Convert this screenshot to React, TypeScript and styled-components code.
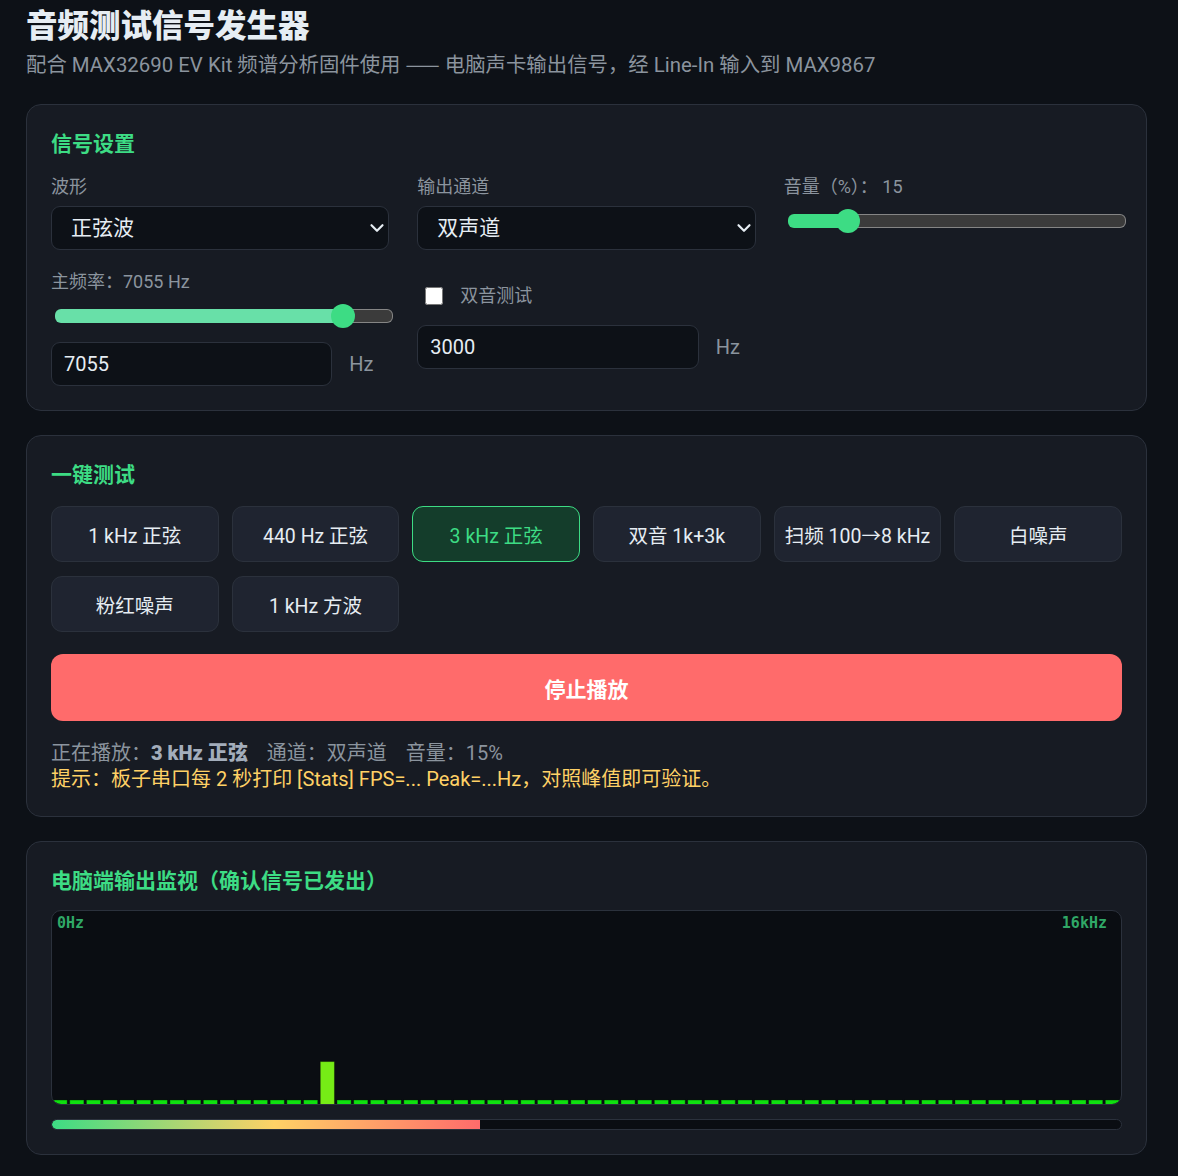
import React from 'react';
import styled, { createGlobalStyle } from 'styled-components';
import { ChevronDown } from 'lucide-react';

const Colors = {
  Page: '#0d1117',
  Card: '#171b23',
  Border: '#2b313c',
  Field: '#0d1117',
  Text: '#e6edf3',
  Muted: '#8b949e',
  Green: '#3ddc84',
  Red: '#ff6b6b',
  Yellow: '#ffd166',
  Screen: '#0a0d12',
};

const GlobalStyle = createGlobalStyle`
  body {
    margin: 0;
    background: ${Colors.Page};
    color: ${Colors.Text};
    font-family: Roboto, "Noto Sans CJK SC", sans-serif;
  }
`;

const Wrapper = styled.div`
  max-width: 1121px;
  padding: 7px 0 24px 26px;
`;

const Title = styled.h1`
  margin: 0;
  font-size: 31.5px;
  line-height: 40px;
  font-weight: 900;
`;

const Subtitle = styled.p`
  margin: 4px 0 25px;
  height: 28px;
  font-size: 20.4px;
  line-height: 28px;
  color: ${Colors.Muted};
`;

// CJK em dashes join into one long rule
const Rule = styled.span`
  font-family: "Noto Sans CJK SC", sans-serif;
  line-height: 1;
`;

const Card = styled.section`
  background: ${Colors.Card};
  border: 1px solid ${Colors.Border};
  border-radius: 15px;
  padding: 24px;
  margin-bottom: 24px;
`;

const CardTitle = styled.h2`
  margin: 0 0 14px;
  font-size: 21px;
  line-height: 30px;
  font-weight: 700;
  color: ${Colors.Green};
`;

const SettingsGrid = styled.div`
  display: grid;
  grid-template-columns: repeat(3, 1fr);
  column-gap: 28px;
  row-gap: 18px;
`;

const Field = styled.div`
  display: flex;
  flex-direction: column;
  min-width: 0;
`;

const Label = styled.label`
  font-size: 18px;
  line-height: 27px;
  color: ${Colors.Muted};
`;

const SelectWrap = styled.div`
  position: relative;
  margin-top: 6px;

  svg {
    position: absolute;
    right: 1px;
    top: 11px;
    pointer-events: none;
  }
`;

const Select = styled.select`
  appearance: none;
  width: 100%;
  height: 44px;
  padding: 0 19px;
  background: ${Colors.Field};
  color: ${Colors.Text};
  border: 1px solid ${Colors.Border};
  border-radius: 9px;
  font-family: inherit;
  font-size: 21px;
  outline: none;
`;

type RangeProps = { $value: number; $fill: string };

const Range = styled.input.attrs({ type: 'range' })<RangeProps>`
  -webkit-appearance: none;
  appearance: none;
  width: calc(100% - 2px);
  height: 12px;
  margin: 14px 0 0 4px;
  border: 1px solid transparent;
  border-radius: 6px;
  background:
    linear-gradient(to right, ${p => p.$fill} calc(12px + (100% - 24px) * ${p => p.$value / 100}), transparent 0) border-box,
    linear-gradient(#3b3b3b, #3b3b3b) padding-box,
    linear-gradient(#858585, #858585) border-box;
  outline: none;

  &::-webkit-slider-thumb {
    -webkit-appearance: none;
    width: 24px;
    height: 24px;
    border-radius: 50%;
    background: ${Colors.Green};
    border: none;
  }
`;

const InputRow = styled.div<{ $top: number }>`
  display: flex;
  align-items: center;
  gap: 17px;
  margin-top: ${p => p.$top}px;
`;

const NumberInput = styled.input`
  flex: 1;
  min-width: 0;
  height: 44px;
  box-sizing: border-box;
  padding: 0 12px;
  background: ${Colors.Field};
  color: ${Colors.Text};
  border: 1px solid ${Colors.Border};
  border-radius: 9px;
  font-family: inherit;
  font-size: 20px;
  outline: none;
`;

const Unit = styled.span`
  width: 40px;
  font-size: 20px;
  color: ${Colors.Muted};
`;

const CheckRow = styled.label`
  display: flex;
  align-items: center;
  gap: 17px;
  margin: 15px 0 0 8px;
  font-size: 18px;
  line-height: 26px;
  color: ${Colors.Muted};

  input {
    width: 18px;
    height: 18px;
    margin: 0;
    color-scheme: light;
  }
`;

const PresetGrid = styled.div`
  display: grid;
  grid-template-columns: repeat(6, 1fr);
  column-gap: 13px;
  row-gap: 14px;
  margin-top: 16px;
`;

const PresetButton = styled.button<{ $active?: boolean }>`
  height: 56px;
  padding: 0 6px;
  border-radius: 11px;
  border: 1px solid ${p => p.$active ? Colors.Green : Colors.Border};
  background: ${p => p.$active ? '#143d2b' : '#1f2430'};
  color: ${p => p.$active ? Colors.Green : Colors.Text};
  font-family: inherit;
  font-size: 19.5px;
  white-space: nowrap;
  cursor: pointer;
`;

const StopButton = styled.button`
  display: block;
  width: 100%;
  height: 67px;
  margin-top: 22px;
  border: none;
  border-radius: 12px;
  background: ${Colors.Red};
  color: #fff;
  font-family: inherit;
  font-size: 21px;
  font-weight: 700;
  cursor: pointer;
`;

const Status = styled.div`
  margin-top: 19px;
  font-size: 20px;
  line-height: 26px;
  color: ${Colors.Muted};

  b {
    color: #a3adbb;
    font-weight: 900;
  }
`;

const Gap = styled.span`
  margin-left: 19px;
`;

const Hint = styled.div`
  font-size: 20px;
  line-height: 26px;
  color: ${Colors.Yellow};
`;

const Screen = styled.div`
  position: relative;
  height: 193px;
  margin-top: 14px;
  background: ${Colors.Screen};
  border: 1px solid ${Colors.Border};
  border-radius: 10px;
  overflow: hidden;

  svg {
    display: block;
    width: 100%;
    height: 100%;
  }
`;

const AxisLabel = styled.span<{ $right?: boolean }>`
  position: absolute;
  top: 2px;
  ${p => p.$right ? 'right: 14px;' : 'left: 5px;'}
  font-family: "DejaVu Sans Mono", monospace;
  font-size: 15px;
  font-weight: 700;
  line-height: 20px;
  color: rgba(61, 220, 132, 0.75);
`;

const Meter = styled.div`
  height: 11px;
  margin-top: 14px;
  box-sizing: border-box;
  background: ${Colors.Screen};
  border: 1px solid ${Colors.Border};
  border-radius: 6px;
  overflow: hidden;
`;

const MeterFill = styled.div`
  height: 100%;
  border-radius: 6px 0 0 6px;
  background: linear-gradient(to right, ${Colors.Green}, ${Colors.Yellow} 52%, ${Colors.Red});
`;

const presets = [
  '1 kHz 正弦', '440 Hz 正弦', '3 kHz 正弦', '双音 1k+3k',
  '扫频 100→8 kHz', '白噪声', '粉红噪声', '1 kHz 方波',
];

const BAR_COUNT = 64;
const PEAK_BAR = 16;

const Spectrum = () => {
  const w = 1071;
  const h = 191;
  const step = w / BAR_COUNT;
  return (
    <svg viewBox={`0 0 ${w} ${h}`} preserveAspectRatio="none">
      {Array.from({ length: BAR_COUNT }, (_, i) => {
        const peak = i === PEAK_BAR;
        const bh = peak ? 42 : 4;
        return (
          <rect
            key={i}
            x={i * step + 1}
            y={h - bh}
            width={step - 2.5}
            height={bh + 2}
            fill={peak ? '#76ec16' : '#10e010'}
            stroke="rgba(0,0,0,0.35)"
            strokeWidth={1}
          />
        );
      })}
    </svg>
  );
};

export default function App() {
  const level = 40;
  return (
    <>
      <GlobalStyle />
      <Wrapper>
        <Title>音频测试信号发生器</Title>
        <Subtitle>
          配合 MAX32690 EV Kit 频谱分析固件使用 <Rule>——</Rule> 电脑声卡输出信号，经 Line-In 输入到 MAX9867
        </Subtitle>

        <Card>
          <CardTitle>信号设置</CardTitle>
          <SettingsGrid>
            <Field>
              <Label>波形</Label>
              <SelectWrap>
                <Select defaultValue="sine">
                  <option value="sine">正弦波</option>
                  <option value="square">方波</option>
                </Select>
                <ChevronDown size={22} strokeWidth={2.4} color={Colors.Text} />
              </SelectWrap>
            </Field>
            <Field>
              <Label>输出通道</Label>
              <SelectWrap>
                <Select defaultValue="stereo">
                  <option value="stereo">双声道</option>
                  <option value="left">左声道</option>
                </Select>
                <ChevronDown size={22} strokeWidth={2.4} color={Colors.Text} />
              </SelectWrap>
            </Field>
            <Field>
              <Label>音量（%）： 15</Label>
              <Range $value={15} $fill={Colors.Green} defaultValue={15} />
            </Field>

            <Field>
              <Label>主频率：7055 Hz</Label>
              <Range $value={88.2} $fill="#68e0a8" defaultValue={88} />
              <InputRow $top={19}>
                <NumberInput defaultValue="7055" />
                <Unit>Hz</Unit>
              </InputRow>
            </Field>
            <Field>
              <CheckRow>
                <input type="checkbox" />
                双音测试
              </CheckRow>
              <InputRow $top={16}>
                <NumberInput defaultValue="3000" />
                <Unit>Hz</Unit>
              </InputRow>
            </Field>
          </SettingsGrid>
        </Card>

        <Card>
          <CardTitle>一键测试</CardTitle>
          <PresetGrid>
            {presets.map(p => (
              <PresetButton key={p} $active={p === '3 kHz 正弦'}>{p}</PresetButton>
            ))}
          </PresetGrid>
          <StopButton>停止播放</StopButton>
          <Status>
            正在播放：<b>3 kHz 正弦</b>
            <Gap>通道：双声道</Gap>
            <Gap>音量：15%</Gap>
          </Status>
          <Hint>提示：板子串口每 2 秒打印 [Stats] FPS=... Peak=...Hz，对照峰值即可验证。</Hint>
        </Card>

        <Card>
          <CardTitle>电脑端输出监视（确认信号已发出）</CardTitle>
          <Screen>
            <Spectrum />
            <AxisLabel>0Hz</AxisLabel>
            <AxisLabel $right>16kHz</AxisLabel>
          </Screen>
          <Meter>
            <MeterFill style={{ width: `${level}%` }} />
          </Meter>
        </Card>
      </Wrapper>
    </>
  );
}
